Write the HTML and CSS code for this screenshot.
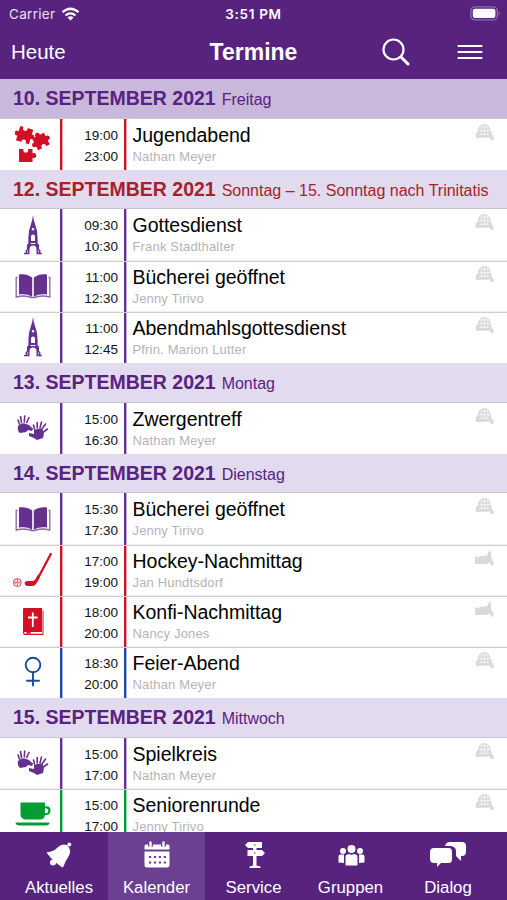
FILE: index.html
```html
<!DOCTYPE html>
<html lang="de">
<head>
<meta charset="utf-8">
<title>Termine</title>
<link rel="stylesheet" href="styles.css">
</head>
<body>
<svg class="sprite" aria-hidden="true">
  <symbol id="puzzle" viewBox="0 0 36 38">
    <g fill="currentColor">
      <path transform="translate(9.500 9.500) rotate(17)" d="M-6.500-7h3.500a2.300 2.300 0 1 0 4 0h6v5a2.300 2.300 0 1 1 0 4.200V8H3.500a2.300 2.300 0 1 0-4.300 0h-5.700V3a2.400 2.400 0 1 1 0-4.300z"/>
      <path transform="translate(26 16.500) rotate(-27)" d="M-6.500-6.500h4a2.400 2.400 0 1 1 4.500 0h4.500v4a2.400 2.400 0 1 1 0 4.500v4.500H2.500a2.400 2.400 0 1 0-4.500 0h-4.500V2.300a2.400 2.400 0 1 1 0-4.500z"/>
      <path d="M4 24h4.500a2.500 2.500 0 1 0 4.500 0h4.500v4.200a2.600 2.600 0 1 1 0 4.600V37H4z"/>
    </g>
  </symbol>
  <symbol id="church" viewBox="0 0 18 40">
    <path fill="currentColor" fill-rule="evenodd" d="M9 0l.8 5L12.500 14l.5 2 .6 7v5l1.400 2v4l1.500 1.500V38H18v1.300h-5.500V34a3.500 3.500 0 0 0-7 0v5.300H0V38h1.500v-2.500L3 34v-4l1.400-2v-5l.6-7 .5-2L8.200 5zM9 13a1.300 1.300 0 1 0 0 2.600A1.300 1.300 0 0 0 9 13zM7 26v-4.500a2 2 0 0 1 4 0V26zM6.500 28v1h5v-1zM3.300 35v3h.6v-3zM14.200 35v3h.6v-3z"/>
  </symbol>
  <symbol id="book" viewBox="0 0 36 26">
    <path fill="currentColor" d="M4 1.500c5-1 9 0 13.200 3v19.500c-4-3-8-3-13.200-2.500zM32 1.500c-5-1-9 0-13.200 3v19.500c4-3 8-3 13.200-2.500z"/>
    <path fill="none" stroke="currentColor" stroke-opacity=".75" stroke-width="1.300" d="M2.500 4.500H1.200V24c6-1.500 11-1.500 15.500.7h2.600C24 22.500 29 22.500 34.800 24V4.500h-1.300"/>
  </symbol>
  <symbol id="hands" viewBox="0 0 34 28">
    <g fill="currentColor"><path d="M2 12q4-4 8-2l3 1 4 4-1 2-4-1-2 2-6 1q-3-2-2-7z"/><path d="M13 19l5 1v-4q5-2 8-1 3 3 1 9l-6 2-3-2-5-2z"/></g>
    <path fill="none" stroke="currentColor" stroke-width="1.600" stroke-linecap="round" d="M3.500 10L2 6M5.500 8.500L4.500 2.500M8.300 8l.4-6M10.700 8.500L13 3.500M18.500 15L17.500 11M21.200 14l0-5.500M24 14l1.500-6M26 15l3.500-5M27.500 18l4-3M11 14.500h5"/>
  </symbol>
  <symbol id="hockey" viewBox="0 0 40 36">
    <path fill="none" stroke="currentColor" stroke-width="2.300" stroke-linecap="round" d="M37.800 2L24.500 27"/>
    <path fill="currentColor" d="M25 22.500l2.500 1-3.500 7q-2 3.500-5 3.500h-5q-2.500-1-2.500-3.500 1-1.500 3-1.500h5q2 0 3-2z"/>
    <g fill="none" stroke="currentColor" stroke-width=".8"><circle cx="4.300" cy="30.500" r="3.900"/><circle cx="4.300" cy="30.500" r="1.900" stroke-dasharray="1 1"/><path d="M4.300 27v7M1 30.500h7" stroke-dasharray="1.200 1"/></g>
  </symbol>
  <symbol id="bible" viewBox="0 0 22 30">
    <path fill="currentColor" d="M1 3q0-1 1-1h18v24H3q-1 0-1 .8L3 27.800h17.500V4.500h1V29H3q-2 0-2-2z"/>
    <path fill="none" stroke="#fff" stroke-width="1.800" d="M10.800 6.500V21M6 11.500h9.600"/>
    <path fill="currentColor" d="M4.500 25.500h4v3l-2-1.200-2 1.200z"/>
  </symbol>
  <symbol id="venus" viewBox="0 0 18 32">
    <g fill="none" stroke="currentColor" stroke-width="1.900" stroke-linecap="round"><circle cx="9" cy="9" r="7.300"/><path d="M9 16.500v13M3 24.800h12"/></g>
  </symbol>
  <symbol id="cup" viewBox="0 0 36 24">
    <path fill="currentColor" fill-rule="evenodd" d="M5.500.5h24.500v4q5.500-1 5.500 4T30 13q-.5 4-4 4.500H10q-4.500-1-4.500-5.500zM30 6.200v5q3.300 0 3.300-2.500T30 6.200zM.5 20.500h34q0 3-4 3H5q-4.500 0-4.500-3z"/>
  </symbol>
  <symbol id="globe" viewBox="0 0 19 17">
    <path fill="#d9d9d9" d="M.8 15V10.500l1.700-1.700Q3.500 1 9.500 1q5.500 0 6.500 7.500l1 3.500 1.500 1.500V17H16l-1.500-2.500z"/>
    <path fill="none" stroke="#f7f7f7" stroke-width=".8" d="M4 7.500h11M6 4h7.500M9.500 1.500v10M7 2.500q-2 5 0 9M12.200 2.500q2 5 0 9M4 11.500h10"/>
  </symbol>
  <symbol id="place" viewBox="0 0 19 17">
    <path fill="#d9d9d9" d="M0 7.500h2l1 1 2-1.500 7-.5 1.500-3.500 1.500-2 1 2v5l1 3 1.500 2v3.500h-2.300l-1.500-3-3 1.500H0z"/>
  </symbol>
</svg>

<header class="top">
  <div class="status">
    <span class="carrier">Carrier
      <svg class="wifi" viewBox="0 0 18 14"><g fill="none" stroke="#fff" stroke-width="2.300"><path d="M1 5.200q8-7 16 0M4 8.500q5-4.300 10 0"/></g><path fill="#fff" d="M6 10.500q3-2.300 6 0L9 13.500z"/></svg>
    </span>
    <span class="clock">3:51 PM</span>
    <svg class="battery" viewBox="0 0 31 15"><rect x=".9" y=".9" width="26.400" height="13" rx="4" fill="none" stroke="#8f6cab" stroke-width="1.300"/><rect x="2.800" y="2.800" width="22.600" height="9.200" rx="2" fill="#fff"/><path d="M28.700 5q2 2.300 0 4.600z" fill="#9b7bb5"/></svg>
  </div>
  <div class="nav">
    <span class="today">Heute</span>
    <h1>Termine</h1>
    <svg class="search" viewBox="0 0 28 28"><circle cx="11.500" cy="11.500" r="10" fill="none" stroke="#fff" stroke-width="2.200"/><path d="M19 19l7 7" stroke="#fff" stroke-width="3" stroke-linecap="round"/></svg>
    <svg class="menu" viewBox="0 0 26 16"><path d="M1.500 2h23M1.500 8h23M1.500 14h23" stroke="#fff" stroke-width="2.200" stroke-linecap="round"/></svg>
  </div>
</header>

<main class="list">
  <h2 class="day current"><b>10. SEPTEMBER 2021</b> <span>Freitag</span></h2>
  <article class="event red"><div class="pic"><svg width="36" height="38"><use href="#puzzle"/></svg></div><div class="time">19:00<br>23:00</div><div class="info"><h3>Jugendabend</h3><p>Nathan Meyer</p></div><svg class="tag"><use href="#globe"/></svg></article>

  <h2 class="day sunday"><b>12. SEPTEMBER 2021</b> <span>Sonntag – 15. Sonntag nach Trinitatis</span></h2>
  <article class="event"><div class="pic"><svg width="18" height="40"><use href="#church"/></svg></div><div class="time">09:30<br>10:30</div><div class="info"><h3>Gottesdienst</h3><p>Frank Stadthalter</p></div><svg class="tag"><use href="#globe"/></svg></article>
  <article class="event"><div class="pic"><svg width="36" height="26"><use href="#book"/></svg></div><div class="time">11:00<br>12:30</div><div class="info"><h3>Bücherei geöffnet</h3><p>Jenny Tirivo</p></div><svg class="tag"><use href="#globe"/></svg></article>
  <article class="event"><div class="pic"><svg width="18" height="40"><use href="#church"/></svg></div><div class="time">11:00<br>12:45</div><div class="info"><h3>Abendmahlsgottesdienst</h3><p>Pfrin. Marion Lutter</p></div><svg class="tag"><use href="#globe"/></svg></article>

  <h2 class="day"><b>13. SEPTEMBER 2021</b> <span>Montag</span></h2>
  <article class="event"><div class="pic"><svg width="34" height="28"><use href="#hands"/></svg></div><div class="time">15:00<br>16:30</div><div class="info"><h3>Zwergentreff</h3><p>Nathan Meyer</p></div><svg class="tag"><use href="#globe"/></svg></article>

  <h2 class="day"><b>14. SEPTEMBER 2021</b> <span>Dienstag</span></h2>
  <article class="event"><div class="pic"><svg width="36" height="26"><use href="#book"/></svg></div><div class="time">15:30<br>17:30</div><div class="info"><h3>Bücherei geöffnet</h3><p>Jenny Tirivo</p></div><svg class="tag"><use href="#globe"/></svg></article>
  <article class="event red"><div class="pic"><svg width="40" height="36"><use href="#hockey"/></svg></div><div class="time">17:00<br>19:00</div><div class="info"><h3>Hockey-Nachmittag</h3><p>Jan Hundtsdorf</p></div><svg class="tag"><use href="#place"/></svg></article>
  <article class="event red"><div class="pic"><svg width="22" height="30"><use href="#bible"/></svg></div><div class="time">18:00<br>20:00</div><div class="info"><h3>Konfi-Nachmittag</h3><p>Nancy Jones</p></div><svg class="tag"><use href="#place"/></svg></article>
  <article class="event blue"><div class="pic"><svg width="18" height="32"><use href="#venus"/></svg></div><div class="time">18:30<br>20:00</div><div class="info"><h3>Feier-Abend</h3><p>Nathan Meyer</p></div><svg class="tag"><use href="#globe"/></svg></article>

  <h2 class="day"><b>15. SEPTEMBER 2021</b> <span>Mittwoch</span></h2>
  <article class="event"><div class="pic"><svg width="34" height="28"><use href="#hands"/></svg></div><div class="time">15:00<br>17:00</div><div class="info"><h3>Spielkreis</h3><p>Nathan Meyer</p></div><svg class="tag"><use href="#globe"/></svg></article>
  <article class="event green"><div class="pic"><svg width="36" height="24"><use href="#cup"/></svg></div><div class="time">15:00<br>17:00</div><div class="info"><h3>Seniorenrunde</h3><p>Jenny Tirivo</p></div><svg class="tag"><use href="#globe"/></svg></article>
</main>

<nav class="tabs">
  <a><svg viewBox="0 0 38 28"><path fill="#fff" d="M6.500 11.500q8-1 11-5 5-5 10-2l1.500 2q2.500 5-.5 9-3 4-5.500 11-2-.5-6-4Q10 17 6.500 11.500z"/><circle cx="29.300" cy="3.500" r="2" fill="#fff"/><circle cx="13" cy="21.500" r="3" fill="#fff"/></svg>Aktuelles</a>
  <a class="active"><svg viewBox="0 0 38 28"><path fill="#fff" d="M8 3.500h2V5a3 3 0 0 0 5 0V3.500h8V5a3 3 0 0 0 5 0V3.500h2q1.500 0 1.500 1.500v3.500h-25V5q0-1.500 1.500-1.500zM6.500 10.500h25V24q0 2.500-2.500 2.500H9Q6.500 26.500 6.500 24z"/><path d="M12.500 1.500v4M25.500 1.500v4" stroke="#fff" stroke-width="2.400" stroke-linecap="round"/><path d="M11 16h17M11 21.500h17" stroke="#6b3f91" stroke-width="2.200" stroke-dasharray="2.200 2.700"/></svg>Kalender</a>
  <a><svg viewBox="0 0 38 28"><path fill="#fff" d="M13 1h14v6H13l-3-3zM12.500 9h14.500l3 3-3 3H12.500zM18 7h3.500v2H18zM18 15h3.500v9.500l4 1V27h-11v-1.500l3.500-1z"/><path fill="#58227f" d="M19 3.500h1.500v1H19zM19 11.500h1.500v1H19z"/></svg>Service</a>
  <a><svg viewBox="0 0 38 28"><g fill="#fff"><circle cx="19.500" cy="8" r="4"/><circle cx="11" cy="10" r="3"/><circle cx="28" cy="10" r="3"/><path d="M13.500 24.500V15.500q0-2 2-2l2-.5 2 1 2-1 2 .5q2 0 2 2v9zM6.500 21.500v-6q0-2 2-2h3.500v8.500zM32.500 21.500v-6q0-2-2-2H27v8.500z"/></g></svg>Gruppen</a>
  <a><svg viewBox="0 0 38 28"><path fill="#fff" d="M16 5q1-4 5-4h12q4 0 4 4v6q0 4-4 4h-1v5l-5-5V10q0-4-5-5zM5 7h15q3 0 3 4v7q0 4-3 4h-8l-4 4v-4H5q-4 0-4-4v-7q0-4 4-4z"/></svg>Dialog</a>
</nav>
</body>
</html>
```
FILE: styles.css
```css
* { box-sizing: border-box; margin: 0; padding: 0; }
body {
  width: 507px;
  height: 900px;
  overflow: hidden;
  display: flex;
  flex-direction: column;
  font-family: "Liberation Sans", Arial, sans-serif;
  background: #fff;
}
.sprite { display: none; }
svg { display: block; }
.top { height: 79px; flex: none; background: #58227f; color: #fff; }
.status {
  height: 27px;
  display: grid;
  grid-template-columns: 1fr auto 1fr;
  align-items: center;
  padding: 0 6px 0 9px;
  font-family: Inter, "Liberation Sans", sans-serif;
}
.carrier { display: flex; align-items: center; gap: 6px; font-size: 13.500px; color: #e9e0f0; letter-spacing: .3px; }
.wifi { width: 19px; height: 14px; }
.clock { font-size: 13.500px; font-weight: 600; letter-spacing: .7px; margin-left: -3px; }
.battery { width: 31px; height: 15px; justify-self: end; }
.nav {
  height: 50px;
  display: grid;
  grid-template-columns: 120px 1fr 75px 38px;
  align-items: center;
  padding: 0 12px 0 11px;
}
.today { font-size: 20.500px; }
.nav h1 { font-size: 23px; font-weight: 700; text-align: center; margin-left: -6px; }
.search { width: 28px; height: 28px; }
.menu { width: 26px; height: 16px; }
.list { flex: 1; min-height: 0; overflow: hidden; }
.day {
  height: 39.600px;
  padding: 8px 0 0 13px;
  background: #e2daef;
  border-bottom: 1px solid #c9c5ce;
  color: #58227f;
  font-size: 16px;
  font-weight: 400;
  line-height: 23px;
  white-space: nowrap;
}
.day b { font-size: 19.500px; margin-right: 1.500px; }
.current { background: #c9b7dc; }
.sunday { color: #a5222b; }
.event {
  --tone: #66308f;
  --edge: color-mix(in srgb, var(--tone) 40%, white);
  height: 51.200px;
  display: grid;
  grid-template-columns: 60px 67px 1fr 32px;
  color: var(--tone);
}
.event + .event { box-shadow: inset 0 1px #cfcfcf, 0 -.5px #dedede; }
.event + .event .time { background-position: 0 1px; }
.red { --tone: #d30f26; }
.blue { --tone: #1c4a9c; }
.green { --tone: #049c34; }
.pic { display: grid; place-items: center; padding-left: 6px; }
.time {
  background: linear-gradient(to right, var(--tone) 2px, var(--edge) 2px 3px, transparent 3px 64px, var(--tone) 64px 66px, var(--edge) 66px) no-repeat;
  padding: 6px 9px 0 0;
  text-align: right;
  font-size: 13.500px;
  line-height: 21px;
  color: #111;
}
.info { padding: 4px 0 0 5.500px; white-space: nowrap; }
.info h3 { font-size: 19.500px; line-height: 24px; font-weight: 400; color: #000; }
.info p { font-size: 13px; line-height: 19px; letter-spacing: .17px; color: #b4b4b4; }
.tag { width: 19px; height: 17px; margin-top: 4px; }
.tabs { height: 68px; flex: none; display: grid; grid-template-columns: 108px 97px 97px 97px 108px; background: #58227f; }
.tabs a { display: flex; flex-direction: column; align-items: center; padding-top: 9px; color: #fff; font-size: 16.800px; line-height: 19px; gap: 9px; }
.tabs svg { width: 38px; height: 28px; }
.tabs .active { background: #6b3f91; }
.tabs a:first-child { padding-left: 10px; }
.tabs a:last-child { padding-right: 10px; }
```
